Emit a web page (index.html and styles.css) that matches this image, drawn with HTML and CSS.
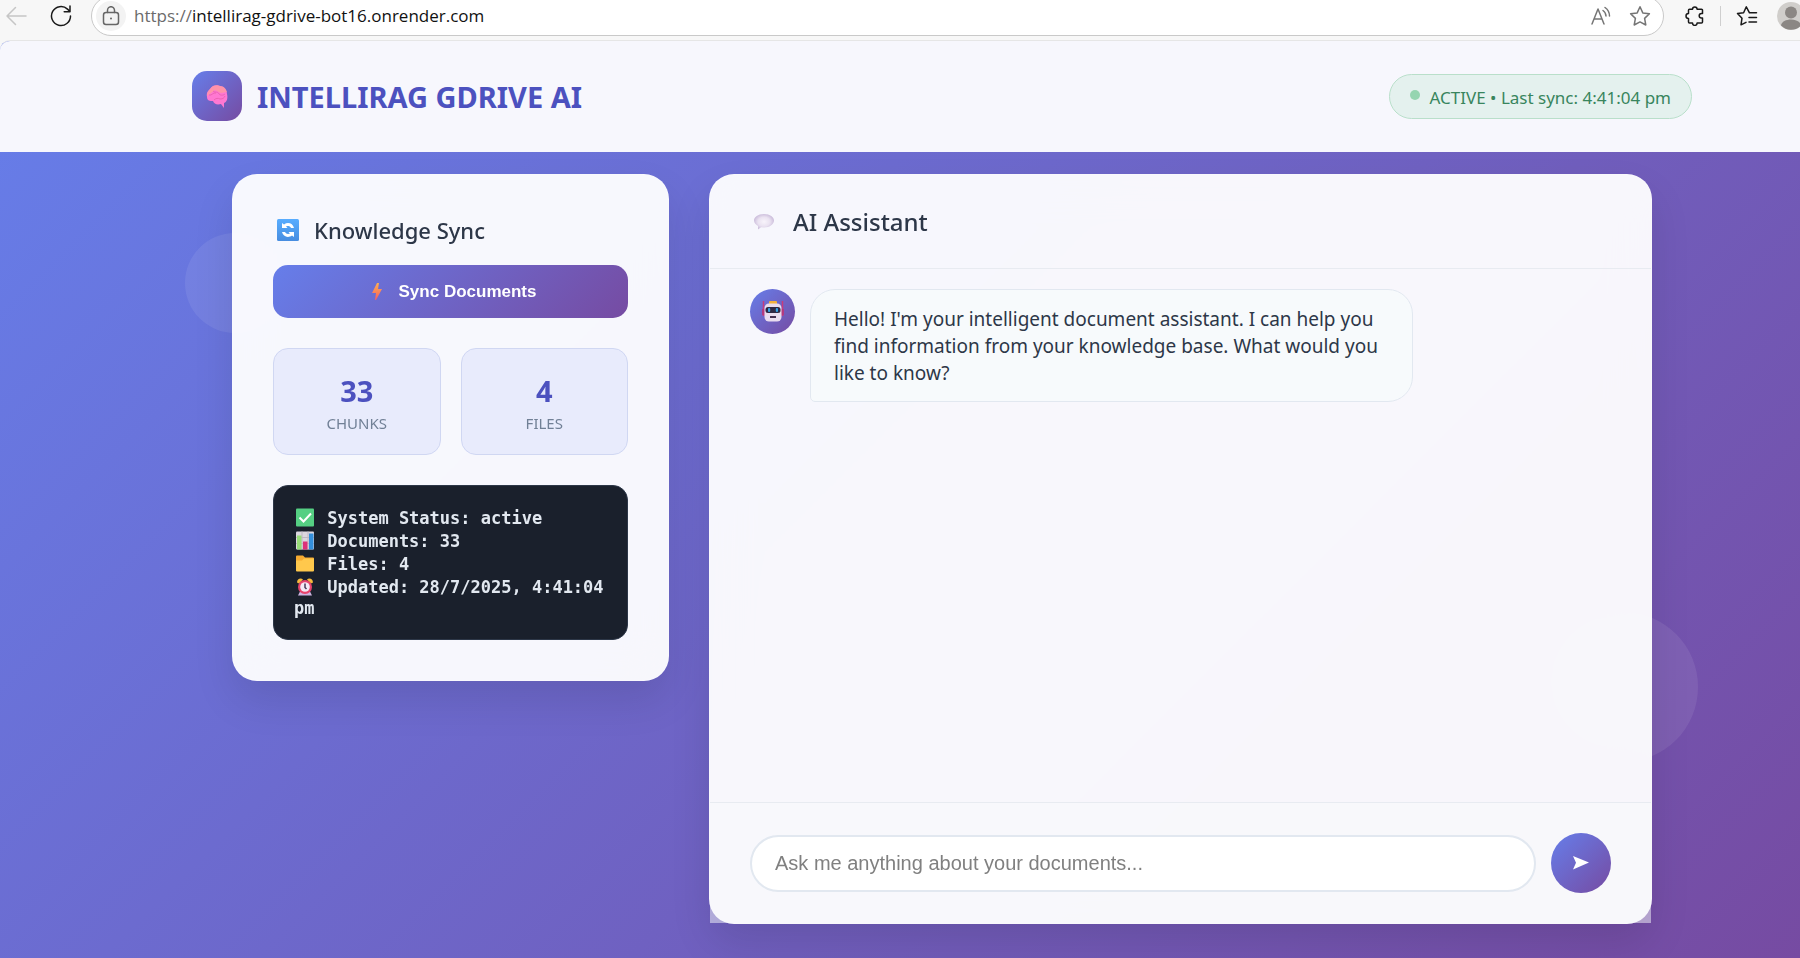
FILE: index.html
```html
<!DOCTYPE html>
<html lang="en">
<head>
<meta charset="utf-8">
<title>IntelliRAG GDrive AI</title>
<link rel="stylesheet" href="styles.css">
</head>
<body>
<nav class="browser" aria-label="Browser toolbar">
  <button class="tool back" aria-label="Back"><svg width="22" height="22" viewBox="0 0 22 22"><path d="M21 11H2M10.5 2.5 2 11l8.500 8.500"/></svg></button>
  <button class="tool" aria-label="Refresh"><svg width="22" height="22" viewBox="0 0 22 22"><path d="M20.500 11a9.500 9.500 0 1 1-3-6.900L20 6.500M20 1v5.800h-5.800"/></svg></button>
  <div class="address">
    <button class="lock" aria-label="Site information"><svg width="18" height="20" viewBox="0 0 18 20"><rect x="1.500" y="6.500" width="15" height="12" rx="2.500"/><path d="M5.500 6.500V4.200a3.500 3.500 0 0 1 7 0v2.300"/><circle cx="9" cy="12.500" r="1" class="dot"/></svg></button>
    <a class="url" href="#"><span class="scheme">https://</span>intellirag-gdrive-bot16.onrender.com</a>
    <button class="tool gray" aria-label="Read aloud"><svg width="20" height="20" viewBox="0 0 20 20"><path d="M1 18 7 3l6 15M3.200 13h7.600M12 4.500a7 7 0 0 1 3 5.500M14 1.500c2.500 1.800 4.500 5 4.500 8.500"/></svg></button>
    <button class="tool gray" aria-label="Add to favorites"><svg width="22" height="22" viewBox="0 0 22 22"><path d="m11 1.800 2.800 6.100 6.600.8-4.800 4.700 1.200 6.600L11 16.900 5.200 20l1.200-6.600L1.600 8.700l6.600-.8z"/></svg></button>
  </div>
  <button class="tool" aria-label="Extensions"><svg width="20" height="20" viewBox="0 0 20 20"><path d="M4.500 3.200h3a2.300 2.300 0 0 1 4.600 0h4.400a1 1 0 0 1 1 1V7.500h-1a2.300 2.300 0 0 0 0 4.600h1v4a1 1 0 0 1-1 1h-4.400a2.300 2.300 0 0 1-4.600 0h-3a1 1 0 0 1-1-1v-3.600a2.500 2.500 0 0 1 0-5V4.200a1 1 0 0 1 1-1z"/></svg></button>
  <span class="divider"></span>
  <button class="tool" aria-label="Favorites"><svg width="22" height="22" viewBox="0 0 22 22"><path d="M13.500 7.800 10.300 1.800 7.600 7.700 1.500 8.500l4.500 4.700L5 19.800l5-2.500M13.500 7.800H20.500M13 12.500h7.500M13 17h7.500"/></svg></button>
  <button class="profile" aria-label="Profile"><svg width="28" height="28" viewBox="0 0 28 28"><circle cx="14" cy="14" r="14" fill="#d0cecb"/><circle cx="14" cy="10.500" r="6" fill="#8b8784"/><path d="M4 23.500c1-8 19-8 20 0A14 14 0 0 1 4 23.500z" fill="#8b8784"/></svg></button>
</nav>
<div class="page">
  <header class="top">
    <div class="brand">
      <span class="logo"><svg width="24" height="26" viewBox="0 0 24 26"><path d="M2 14C1 9 4 7 5 6c3-5 8-4 10-3 4 0 7 4 7 8 1 4 0 8-3 9v5l-3-4c-4 1-7 0-8-3-3 0-6 0-6-4z" fill="#ff78d2"/><path d="M2 13c0-4 2-6 3-7 3-5 8-4 10-3 4 0 6 3 7 6l-6 1-6-3z" fill="#ff9aa0" opacity=".8"/><path d="M4 12c3 1 4-3 7-2M8 8c2 2 5 0 6 3 2 2 5 1 6 0M9 17c2-2 4-2 6-1 3 0 4-1 5-3" fill="none" stroke="#ec63b4"/></svg></span>
      <h1>INTELLIRAG GDRIVE AI</h1>
    </div>
    <div class="status"><span class="pulse"></span><span>ACTIVE • Last sync: 4:41:04 pm</span></div>
  </header>
  <main class="layout">
    <span class="bubble-a"></span><span class="bubble-b"></span>
    <section class="card sync">
      <h2><svg width="22" height="22" viewBox="0 0 22 22"><defs><linearGradient id="blue" x2="0" y2="1"><stop stop-color="#58adff"/><stop offset="1" stop-color="#478de0"/></linearGradient></defs><rect width="22" height="22" rx="1.500" fill="url(#blue)"/><path d="M5 9V4l2 1.500c4-3 9-1 10 3.500h-3c-1-2-3-2.500-5-1.500L10.500 9zM17 13v5l-2-1.500c-4 3-9 1-10-3.500h3c1 2 3 2.500 5 1.500L11.500 13z" fill="#fff"/></svg>Knowledge Sync</h2>
      <button class="sync-button"><svg width="10" height="17" viewBox="0 0 10 17"><defs><linearGradient id="bolt" x2="0" y2="1"><stop stop-color="#ffb04f"/><stop offset="1" stop-color="#f65d62"/></linearGradient></defs><path d="M5 0h2L6 6h4L4 17H3l1-7H0z" fill="url(#bolt)"/></svg>Sync Documents</button>
      <div class="stats">
        <div class="stat"><strong>33</strong><span>CHUNKS</span></div>
        <div class="stat"><strong>4</strong><span>FILES</span></div>
      </div>
      <div class="log">
        <p><svg class="emoji" viewBox="0 0 18 18"><rect width="18" height="18" rx="1" fill="#55cf83"/><path d="m3.500 9 4 4L15 5" fill="none" stroke="#fff" stroke-width="2"/></svg> System Status: active</p>
        <p><svg class="emoji" viewBox="0 0 18 18"><rect width="18" height="18" rx="1" fill="#dcd6df"/><path d="M0 6h18M0 12h18M6 0v18M12 0v18" stroke="#beb7c4"/><path d="M1 4h4.500v14H1z" fill="#98dc78"/><path d="M7 10h4.500v8H7z" fill="#dc3279"/><path d="M13 2h4.500v16H13z" fill="#348fdc"/></svg> Documents: 33</p>
        <p><svg class="emoji" viewBox="0 0 18 18"><path d="M0 2q0-1 1-1h6l2 2h8q1 0 1 1v6H0z" fill="#f6aa31"/><path d="M0 6h6l2-2h10v12q0 1-1 1H1q-1 0-1-1z" fill="#ffc84c"/></svg> Files: 4</p>
        <p><svg class="emoji" viewBox="0 0 18 18"><path d="M1 5c0-4 4-5 6-3L3 6zM17 5c0-4-4-5-6-3l4 4z" fill="#f6b83c"/><path d="M2 18l2-4h10l2 4z" fill="#cdb4e0"/><circle cx="9" cy="9.500" r="7" fill="#e8436c"/><circle cx="9" cy="9.500" r="4.800" fill="#f4e9f5"/><path d="M9 6v4l1.500 1.500" fill="none" stroke="#4a3858" stroke-width="1.500"/></svg> Updated: 28/7/2025, 4:41:04 pm</p>
      </div>
    </section>
    <section class="card chat">
      <h2><svg width="20" height="16" viewBox="0 0 20 16"><defs><radialGradient id="talk"><stop stop-color="#f8f4fb"/><stop offset=".6" stop-color="#eae2f1"/><stop offset="1" stop-color="#cdbfdc"/></radialGradient></defs><path d="M10 0c6 0 10 3 10 6.500S16 13.500 10 13.500l-3-.2-3 2.200V12C2 11 0 9 0 6.500 0 3 4 0 10 0z" fill="url(#talk)"/></svg>AI Assistant</h2>
      <div class="messages">
        <div class="avatar"><svg width="22" height="21" viewBox="0 0 22 21"><path d="M1.500 0v15M20.500 0v15" stroke="#c73b7c" stroke-width="1.500"/><path d="M0 8h3v6H0zM19 8h3v6h-3z" fill="#b23a80"/><rect x="7" y="0" width="8" height="4" rx="1" fill="#f3b13c"/><rect x="2.500" y="2.500" width="17" height="18" rx="4.500" fill="#e9dcef"/><rect x="3.500" y="6" width="15" height="6" rx="2.500" fill="#2d2844"/><rect x="6" y="7" width="2.200" height="4" rx="1" fill="#35a1e6"/><rect x="13.800" y="7" width="2.200" height="4" rx="1" fill="#35a1e6"/><rect x="8" y="15" width="6" height="2" fill="#443050"/></svg></div>
        <p class="message">Hello! I'm your intelligent document assistant. I can help you find information from your knowledge base. What would you like to know?</p>
      </div>
      <form class="composer">
        <input type="text" aria-label="Question" placeholder="Ask me anything about your documents...">
        <button type="button" class="send" aria-label="Send"><svg width="16" height="14" viewBox="0 0 16 14"><path d="M0 0 16 6.500 0 13.500 3 6.700z" fill="#fff"/></svg></button>
      </form>
    </section>
  </main>
</div>
</body>
</html>
```
FILE: styles.css
```css
* { box-sizing: border-box; }
body {
  margin: 0;
  min-height: 100vh;
  display: flex;
  flex-direction: column;
  background: #f7f7f7;
  font-family: "Noto Sans", "Open Sans", sans-serif;
  color: #2d3748;
  overflow: hidden;
}
h1, h2, p { margin: 0; }
button { border: 0; padding: 0; background: none; display: flex; align-items: center; justify-content: center; }
svg { flex: none; }

.browser {
  display: flex;
  align-items: center;
  height: 40px;
  padding: 0 0 8px 5px;
  overflow: hidden;
}
.tool svg, .lock svg { fill: none; stroke: #1a1a1a; stroke-width: 1.5; stroke-linecap: round; stroke-linejoin: round; }
.back { margin-right: 23px; }
.back svg { stroke: #c6c6c6; }
.gray svg { stroke: #757575; }
.address {
  flex: 1;
  display: flex;
  align-items: center;
  height: 40px;
  margin: 0 21px 0 19px;
  padding: 0 12px 0 4px;
  background: #fff;
  border: 1px solid #c9c9c9;
  border-radius: 20px;
}
.lock { width: 30px; height: 30px; margin-right: 8px; border-radius: 50%; background: #f3f3f3; }
.lock svg { stroke: #666; }
.lock .dot { fill: #666; stroke: none; }
.url { flex: 1; padding-bottom: 2px; font: 17px "Open Sans", sans-serif; color: #111; text-decoration: none; }
.scheme { color: #6b6b6b; }
.address .tool { margin-left: 18px; }
.divider { width: 1px; height: 20px; margin: 0 15px; background: #cfcfcf; }
.profile { margin: 0 -5px 0 19px; }

.page {
  flex: 1;
  display: flex;
  flex-direction: column;
  border-top: 1px solid #e6e6e6;
  border-top-left-radius: 10px;
  overflow: hidden;
  background: linear-gradient(135deg, #667eea 0%, #764ba2 100%);
}
.top {
  display: flex;
  align-items: center;
  justify-content: space-between;
  padding: 30px 108px 31px 192px;
  background: #f7f7fd;
}
.brand { display: flex; align-items: center; gap: 15px; }
.logo, .avatar {
  display: flex;
  align-items: center;
  justify-content: center;
  width: 50px;
  height: 50px;
  border-radius: 15px;
  background: linear-gradient(135deg, #667eea, #764ba2);
}
h1 { padding-top: 2px; font-size: 29px; font-weight: 700; line-height: 38px; color: #4c51bf; }
.status {
  display: flex;
  align-items: center;
  gap: 10px;
  height: 45px;
  padding: 2px 20px 0;
  border: 1px solid #b9dfca;
  border-radius: 23px;
  background: #e4f1ee;
  color: #38855d;
  font-size: 17px;
}
.pulse { width: 10px; height: 10px; margin-bottom: 4px; border-radius: 50%; background: #95d5b0; }

.layout {
  position: relative;
  flex: 1;
  display: grid;
  grid-template-columns: 437fr 943fr;
  align-items: start;
  gap: 40px;
  padding: 22px 148px 34px 232px;
}
.bubble-a, .bubble-b { position: absolute; border-radius: 50%; background: rgba(255, 255, 255, .08); }
.bubble-a { left: 185px; top: 81px; width: 100px; height: 100px; }
.bubble-b { right: 102px; bottom: 196px; width: 150px; height: 150px; }
.card {
  position: relative;
  border: 1px solid rgba(255, 255, 255, .2);
  border-radius: 25px;
  background: rgba(255, 255, 255, .95);
  box-shadow: 0 20px 40px rgba(0, 0, 0, .1);
  backdrop-filter: blur(20px);
}
.sync { padding: 40px; }
h2 { display: flex; align-items: center; font-weight: 500; }
.sync h2 { gap: 15px; padding-left: 4px; font-size: 22px; line-height: 30px; margin-bottom: 20px; }
.sync-button {
  width: 100%;
  height: 53px;
  gap: 17px;
  border-radius: 15px;
  background: linear-gradient(135deg, #667eea, #764ba2);
  color: #fff;
  font: bold 17px "Liberation Sans", sans-serif;
}
.sync-button svg { margin-left: 7px; }
.stats { display: grid; grid-template-columns: 1fr 1fr; gap: 20px; margin: 30px 0; }
.stat {
  display: flex;
  flex-direction: column;
  align-items: center;
  padding: 21px 20px 19px;
  border: 1px solid #d0d7f2;
  border-radius: 15px;
  background: #e8ebfc;
}
.stat strong { font-size: 29px; line-height: 42px; color: #4c51bf; }
.stat span { font-size: 15px; line-height: 23px; color: #718096; }
.log {
  padding: 20px;
  border: 1px solid #2d3748;
  border-radius: 15px;
  background: #1a202c;
  color: #e2e8f0;
  font: bold 17px/21px "DejaVu Sans Mono", monospace;
}
.emoji { width: 18px; height: 23px; margin: 0 3px 0 2px; vertical-align: -5px; }

.chat { display: flex; flex-direction: column; min-height: 750px; }
.chat h2 { gap: 19px; padding: 30px 44px; font-size: 24px; line-height: 33px; border-bottom: 1px solid #e8ebf1; }
.messages { flex: 1; display: flex; align-items: flex-start; gap: 15px; padding: 20px 40px; }
.avatar { width: 45px; height: 45px; border-radius: 50%; }
.message {
  width: 70%;
  padding: 16px 23px 14px;
  border: 1px solid #e2e8f0;
  border-radius: 25px 25px 25px 5px;
  background: #f7fafc;
  font-size: 19px;
  line-height: 27px;
}
.composer {
  display: flex;
  align-items: center;
  gap: 15px;
  padding: 30px 40px;
  border-top: 1px solid #e8ebf1;
  background: rgba(247, 250, 252, .5);
}
.composer input {
  flex: 1;
  height: 57px;
  padding: 0 23px;
  border: 2px solid #e2e8f0;
  border-radius: 29px;
  background: #fff;
  font: 20px "Liberation Sans", sans-serif;
}
.composer input::placeholder { color: #808080; }
.send { width: 60px; height: 60px; border-radius: 50%; background: linear-gradient(135deg, #667eea, #764ba2); }
```
